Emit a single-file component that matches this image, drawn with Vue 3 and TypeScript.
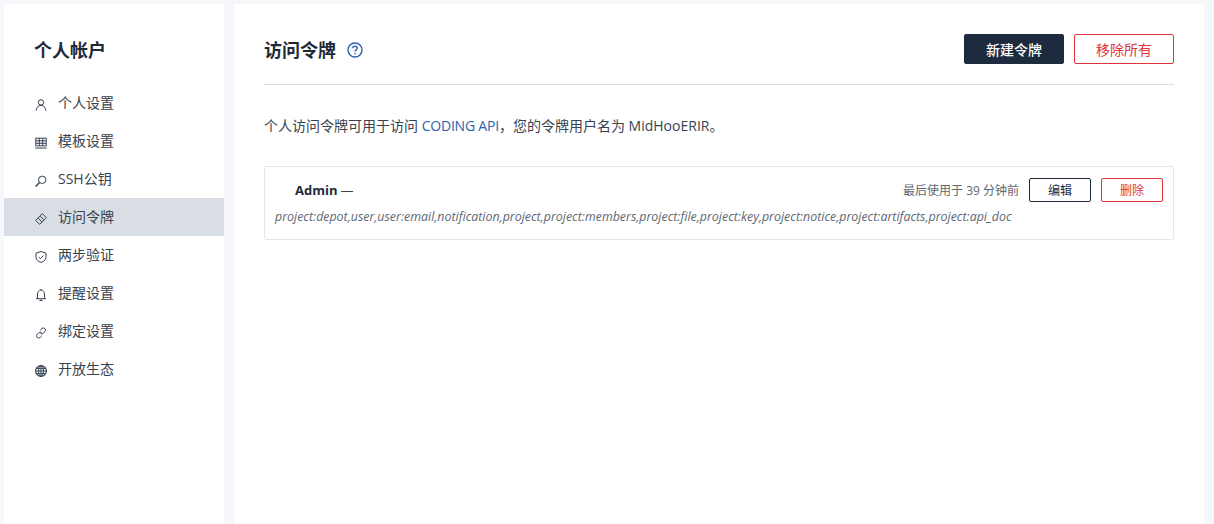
<script setup lang="ts">
const items = [
  { key: 'user', label: '个人设置' },
  { key: 'table', label: '模板设置' },
  { key: 'key', label: 'SSH公钥' },
  { key: 'token', label: '访问令牌', active: true },
  { key: 'shield', label: '两步验证' },
  { key: 'bell', label: '提醒设置' },
  { key: 'link', label: '绑定设置' },
  { key: 'globe', label: '开放生态' },
]
</script>

<template>
  <div class="page">
    <aside class="side">
      <h2 class="side-title">个人帐户</h2>
      <nav class="nav">
        <a v-for="it in items" :key="it.key" class="nav-item" :class="{ active: it.active }">
          <svg class="nav-icon" viewBox="0 0 12 12" fill="none" stroke="#364250" stroke-width="1">
            <template v-if="it.key === 'user'">
              <circle cx="6" cy="3.400" r="2.700" />
              <path d="M1.200 11.600c.3-3.200 2-5.200 4.800-5.200s4.500 2 4.800 5.200" />
            </template>
            <template v-else-if="it.key === 'table'">
              <rect x=".8" y="1.200" width="10.400" height="7.600" />
              <path d="M.8 3.800h10.400M.8 6.300h10.400M4.300 1.200v7.600M7.700 1.200v7.600M.2 11h11.600" />
            </template>
            <template v-else-if="it.key === 'key'">
              <circle cx="7.200" cy="4.800" r="3.700" />
              <path d="M4.500 7.500L.6 11.500" stroke-width="1.500" />
            </template>
            <template v-else-if="it.key === 'token'">
              <path d="M.6 7.300L7.300.6l4.100 4.100-6.700 6.700z" />
              <path d="M3.200 5.200l3.600 3.600M5.200 3.200l3.600 3.600" />
            </template>
            <template v-else-if="it.key === 'shield'">
              <path d="M6 .5l5 1.700v4.100c0 2.600-2.300 4.200-5 5.200-2.700-1-5-2.600-5-5.200V2.200z" />
              <path d="M3.700 5.900l1.700 1.700 2.900-3" />
            </template>
            <template v-else-if="it.key === 'bell'">
              <path d="M2.500 9.500V5c0-2.300 1.500-4 3.500-4s3.500 1.700 3.500 4v4.500M1 9.700h10" />
              <path d="M4.500 11.400h3" stroke-width="1.200" />
              <path d="M6 .1v1" />
            </template>
            <template v-else-if="it.key === 'link'">
              <path d="M5.200 3.200l1.600-1.600a2.100 2.100 0 0 1 3 3L8.300 6.200a2.100 2.100 0 0 1-3 0" />
              <path d="M6.800 8.800l-1.600 1.600a2.100 2.100 0 0 1-3-3l1.500-1.600a2.100 2.100 0 0 1 3 0" />
            </template>
            <template v-else>
              <circle cx="6" cy="6" r="5.400" stroke-width="1.200" />
              <ellipse cx="6" cy="6" rx="2.400" ry="5.400" />
              <path d="M6 .6v10.800M.6 6h10.800M1.300 3.400h9.400M1.300 8.600h9.400" />
            </template>
          </svg>
          <span class="nav-label">{{ it.label }}</span>
        </a>
      </nav>
    </aside>

    <main class="main">
      <header class="head">
        <div class="head-left">
          <h1 class="title">访问令牌</h1>
          <svg class="help" viewBox="0 0 16 16" fill="none" stroke="#2a62b0" stroke-width="1.400">
            <circle cx="8" cy="8" r="7" />
            <path d="M5.800 6.300c0-1.300 1-2.100 2.200-2.100s2.200.8 2.200 2c0 1.700-2.200 1.700-2.200 3.400" />
            <path d="M8 11v1.300" />
          </svg>
        </div>
        <div class="head-actions">
          <button class="btn btn-dark">新建令牌</button>
          <button class="btn btn-danger">移除所有</button>
        </div>
      </header>

      <p class="desc">个人访问令牌可用于访问 <a class="link">CODING API</a>，您的令牌用户名为 MidHooERIR。</p>

      <section class="card">
        <div class="card-top">
          <div class="card-name"><strong>Admin</strong><span class="dash">—</span></div>
          <div class="card-right">
            <span class="used">最后使用于 39 分钟前</span>
            <button class="btn-sm btn-edit">编辑</button>
            <button class="btn-sm btn-del">删除</button>
          </div>
        </div>
        <div class="scopes">project:depot,user,user:email,notification,project,project:members,project:file,project:key,project:notice,project:artifacts,project:api_doc</div>
      </section>
    </main>
  </div>
</template>

<style>
html, body { margin: 0; background: #f5f7fb; }
</style>

<style scoped>
.page {
  display: flex;
  gap: 10px;
  height: 520px;
  padding: 4px 10px 0 4px;
  overflow: hidden;
  background: #f5f7fb;
  font-family: "Open Sans", "Noto Sans CJK SC", sans-serif;
  color: #38434f;
}
.side {
  width: 220px;
  flex: none;
  background: #fff;
}
.side-title {
  margin: 0;
  padding: 32px 0 0 30px;
  height: 46px;
  font-size: 18px;
  line-height: 28px;
  font-weight: 700;
  color: #1f2a37;
}
.nav {
  display: flex;
  flex-direction: column;
  padding-top: 2px;
}
.nav-item {
  height: 38px;
  display: flex;
  align-items: center;
  padding-left: 31px;
  gap: 11px;
  font-size: 14px;
  color: #38434f;
}
.nav-item.active { background: #d9dee4; }
.nav-label { margin-bottom: 2px; }
.nav-icon { width: 12px; height: 12px; flex: none; margin-top: 4px; }
.main {
  flex: 1;
  min-width: 0;
  background: #fff;
  padding: 0 30px;
}
.head {
  height: 81px;
  display: flex;
  align-items: center;
  justify-content: space-between;
  border-bottom: 1px solid #dcdfe3;
  padding-top: 9px;
  box-sizing: border-box;
}
.head-left { display: flex; align-items: center; gap: 11px; padding-top: 2px; }
.title {
  margin: 0;
  font-size: 18px;
  line-height: 28px;
  font-weight: 700;
  color: #1f2a37;
}
.help { width: 16px; height: 16px; }
.head-actions { display: flex; gap: 10px; }
.btn {
  width: 100px;
  height: 30px;
  border-radius: 2px;
  font: inherit;
  font-size: 14px;
  padding: 0;
  box-sizing: border-box;
}
.btn-dark { background: #1e2a3e; border: 1px solid #1e2a3e; color: #fff; font-weight: 500; }
.btn-danger { background: #fff; border: 1px solid #e0343c; color: #e0343c; }
.desc {
  margin: 30px 0 0;
  font-size: 14px;
  line-height: 22px;
  color: #38434f;
}
.link { color: #2a62b0; letter-spacing: -0.2px; }
.card {
  margin-top: 29px;
  height: 74px;
  box-sizing: border-box;
  border: 1px solid #e4e6e9;
  border-radius: 2px;
  padding: 11px 10px 0;
}
.card-top {
  display: flex;
  justify-content: space-between;
  align-items: center;
  height: 24px;
}
.card-name {
  padding-left: 20px;
  font-size: 13px;
  color: #1f2a37;
  display: flex;
  gap: 3px;
  align-items: center;
}
.card-name strong { font-weight: 700; }
.dash { font-weight: 400; color: #38434f; }
.card-right { display: flex; align-items: center; gap: 10px; }
.used { font-size: 12px; color: #5e6772; }
.btn-sm {
  width: 62px;
  height: 24px;
  padding: 0;
  border-radius: 2px;
  font: inherit;
  font-size: 12px;
  background: #fff;
  box-sizing: border-box;
}
.btn-edit { border: 1px solid #1e2a3e; color: #1e2a3e; }
.btn-del { border: 1px solid #e0343c; color: #e0343c; }
.scopes {
  margin-top: 5px;
  font-size: 12.400px;
  line-height: 20px;
  font-style: italic;
  color: #5e6772;
  white-space: nowrap;
}
</style>
